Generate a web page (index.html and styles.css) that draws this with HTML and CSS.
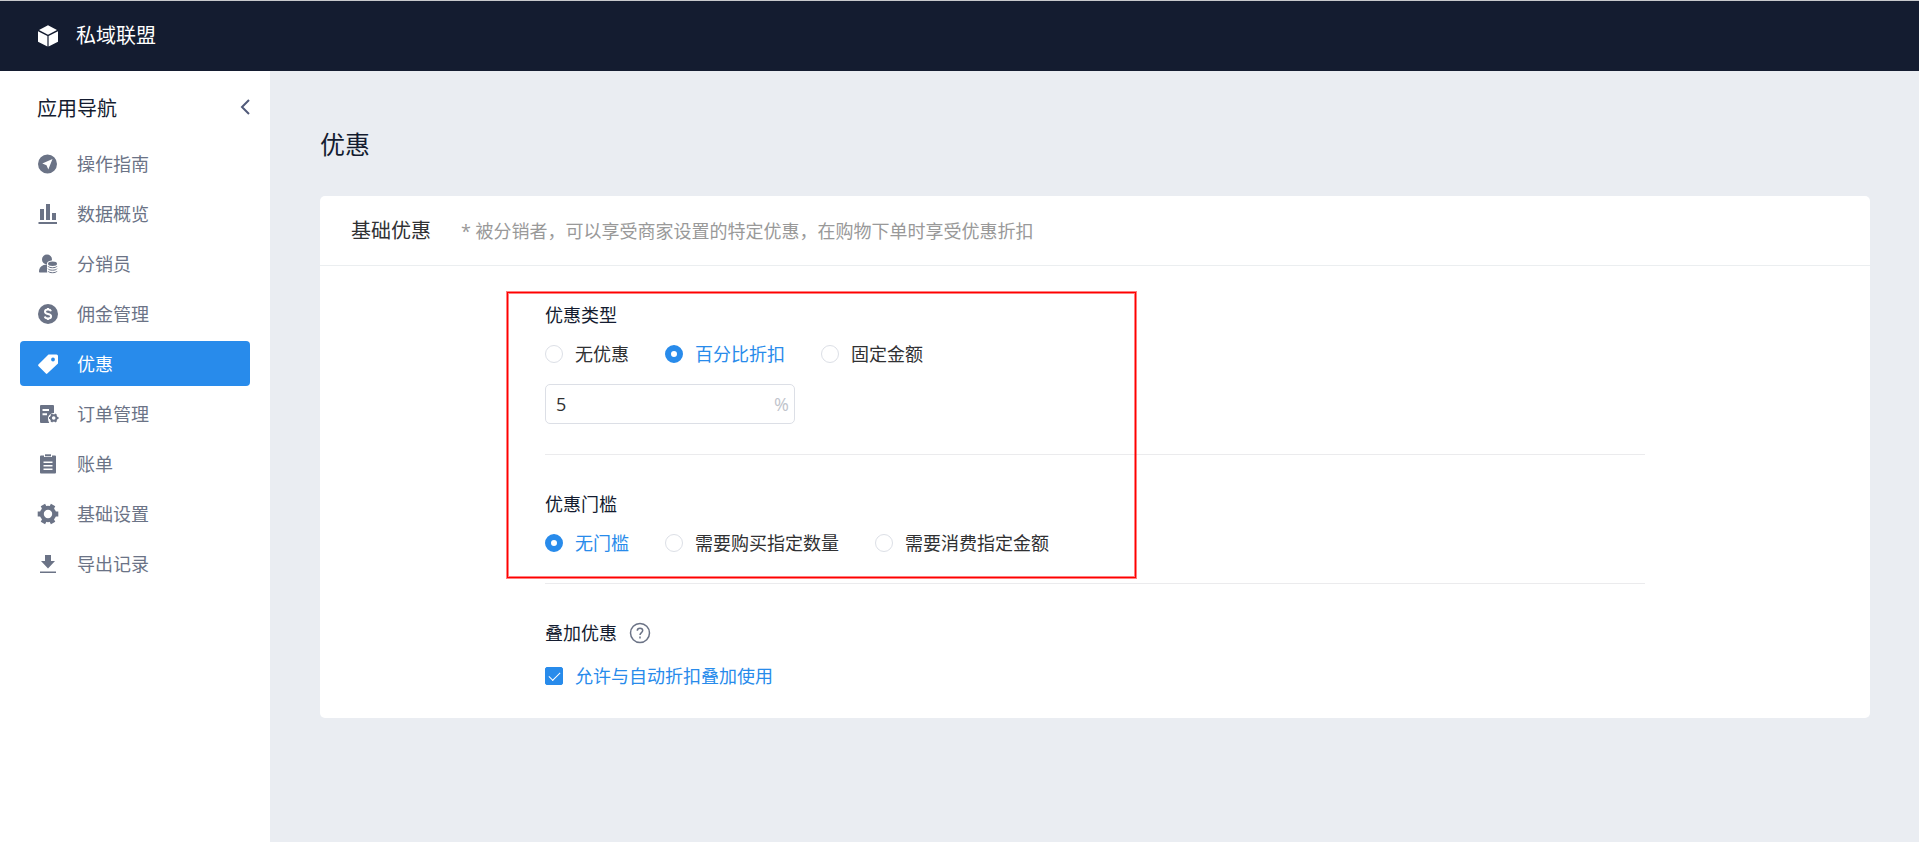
FILE: index.html
```html
<!DOCTYPE html>
<html lang="zh-CN">
<head>
<meta charset="utf-8">
<title>私域联盟</title>
<link rel="stylesheet" href="styles.css">
</head>
<body>
<header class="topbar">
  <svg class="icon" viewBox="0 0 20 20" aria-hidden="true"><path d="M10-.8 19 4 10 8.700 1 4zM0 5.200 9.400 10V20.500L0 15.700zM20 5.200 10.600 10V20.500L20 15.700z"/></svg>
  <span class="brand">私域联盟</span>
</header>
<div class="layout">
  <aside class="sidebar">
    <div class="side-head">
      <h2 class="side-title">应用导航</h2>
      <button class="collapse" type="button" aria-label="收起"><svg viewBox="0 0 10 16" aria-hidden="true"><path d="M9 1 2 8l7 7"/></svg></button>
    </div>
    <nav class="nav">
      <a class="nav-item" href="#"><svg class="icon" viewBox="0 0 20 20"><path fill-rule="evenodd" d="M9.500.5a9.500 9.500 0 1 0 0 19 9.500 9.500 0 0 0 0-19zM14.500 5 10.300 15.500 8.500 11.200 4.300 9.500z"/></svg>操作指南</a>
      <a class="nav-item" href="#"><svg class="icon" viewBox="0 0 20 20"><path d="M2 5h4v11H2zM8 0h4v16H8zM14 9h4v7h-4zM.5 18H19v2H.5z"/></svg>数据概览</a>
      <a class="nav-item" href="#"><svg class="icon" viewBox="0 0 20 20"><circle cx="9" cy="5.500" r="5"/><path d="M1 17.500C1 13.500 4 10.500 9 10.500S17 13 17 17.500c0 .8-.5 1-1 1H2c-.6 0-1-.3-1-1z"/><path class="gap" d="M9 9.500c0-4 11-4 11 0V18c0 3-11 3-11 0z"/><ellipse cx="14.500" cy="9.700" rx="4.500" ry="2.200"/><path class="line" d="M10 12.200c1 2 8 2 9 0M10 14.700c1 2 8 2 9 0M10 17.200c1 2 8 2 9 0"/></svg>分销员</a>
      <a class="nav-item" href="#"><svg class="icon" viewBox="0 0 20 20"><circle cx="10" cy="10" r="10"/><path class="cut" d="M13 7.200C12.600 5.900 11.500 5.500 10 5.500c-1.800 0-3 .8-3 2.200 0 3 6.100 1.500 6.100 4.500 0 1.500-1.300 2.300-3.100 2.300-1.700 0-2.900-.6-3.200-2M10 4v2M10 14v2"/></svg>佣金管理</a>
      <a class="nav-item active" href="#" aria-current="page"><svg class="icon" viewBox="0 0 20 20"><path fill-rule="evenodd" d="M10.500.5H18.500A1.500 1.500 0 0 1 20 2v7.500L9.300 19.600a1 1 0 0 1-1.400 0L.4 12a1 1 0 0 1 0-1.400zM15 3.600a1.900 1.900 0 1 0 0 3.800 1.900 1.900 0 0 0 0-3.800z"/></svg>优惠</a>
      <a class="nav-item" href="#"><svg class="icon" viewBox="0 0 20 20"><path fill-rule="evenodd" d="M3 1h12a1 1 0 0 1 1 1v7c-3.500 0-6 2.500-6 5.500 0 1.500.4 3 1.200 4.500H3a1 1 0 0 1-1-1V2a1 1 0 0 1 1-1zM4.500 5V7H11V5zM4.500 9.300v2H9v-2z"/><circle class="line ring" cx="15.700" cy="14" r="2.800"/><path class="line ring" d="M11 14h2M18.500 14h2M13.400 10l1 1.700M18 10l-1 1.700M13.400 18l1-1.700M18 18l-1-1.700"/></svg>订单管理</a>
      <a class="nav-item" href="#"><svg class="icon" viewBox="0 0 20 20"><path fill-rule="evenodd" d="M3 1.500h3V3h8V1.500h3A1 1 0 0 1 18 2.500v16a1 1 0 0 1-1 1H3a1 1 0 0 1-1-1v-16a1 1 0 0 1 1-1zM5.500 7.500V9h9V7.500zM5.500 11v1.500h9V11zM5.500 14.500V16h9v-1.500z"/><path d="M7 .3h6v2H7z"/></svg>账单</a>
      <a class="nav-item" href="#"><svg class="icon" viewBox="0 0 20 20"><circle class="line rim" cx="10" cy="10" r="6.200"/><path class="line teeth" d="M-.3 10H3M17 10h3.300M4.900 1.100l1.600 2.800M15.100 1.100l-1.600 2.800M4.900 18.900l1.600-2.800M15.100 18.900l-1.600-2.800"/></svg>基础设置</a>
      <a class="nav-item" href="#"><svg class="icon" viewBox="0 0 20 20"><path d="M7 1h6v6h4l-7 7.500L3 7h4zM2 17.500h16V19H2z"/></svg>导出记录</a>
    </nav>
  </aside>
  <main class="main">
    <h1 class="page-title">优惠</h1>
    <section class="card">
      <div class="card-head">
        <h2 class="card-title">基础优惠</h2>
        <p class="hint">* 被分销者，可以享受商家设置的特定优惠，在购物下单时享受优惠折扣</p>
      </div>
      <form class="form">
        <fieldset class="group">
          <legend class="label">优惠类型</legend>
          <div class="options">
            <label class="option"><input type="radio" name="type">无优惠</label>
            <label class="option"><input type="radio" name="type" checked>百分比折扣</label>
            <label class="option"><input type="radio" name="type">固定金额</label>
          </div>
          <div class="field">
            <input class="field-input" type="text" value="5" aria-label="折扣百分比">
            <span class="unit">%</span>
          </div>
        </fieldset>
        <fieldset class="group">
          <legend class="label">优惠门槛</legend>
          <div class="options">
            <label class="option"><input type="radio" name="limit" checked>无门槛</label>
            <label class="option"><input type="radio" name="limit">需要购买指定数量</label>
            <label class="option"><input type="radio" name="limit">需要消费指定金额</label>
          </div>
        </fieldset>
        <fieldset class="group stack">
          <legend class="label">叠加优惠<button class="help" type="button" aria-label="帮助"><svg viewBox="0 0 22 22" aria-hidden="true"><circle cx="11" cy="11" r="9.500"/><path d="M8.300 8.800c0-3.500 5.400-3.300 5.400-.2 0 1.900-2.700 2.200-2.700 4.400M11 14.600v1.800"/></svg></button></legend>
          <div class="options">
            <label class="option"><input type="checkbox" checked>允许与自动折扣叠加使用</label>
          </div>
        </fieldset>
        <div class="highlight" aria-hidden="true"></div>
      </form>
    </section>
  </main>
</div>
</body>
</html>
```
FILE: styles.css
```css
* { box-sizing: border-box; }

body {
  margin: 0;
  min-height: 100vh;
  display: flex;
  flex-direction: column;
  background: #eaedf2;
  color: #303133;
  font: 400 18px/24px "Open Sans", "Noto Sans CJK SC", sans-serif;
}

h1, h2, p { margin: 0; font-weight: inherit; }

button {
  padding: 0;
  border: 0;
  background: none;
  cursor: pointer;
}

.icon {
  width: 20px;
  height: 20px;
  flex: none;
  fill: currentColor;
  overflow: visible;
}

.topbar {
  display: flex;
  align-items: center;
  gap: 18px;
  height: 71px;
  padding: 0 38px;
  border-top: 1px solid #c8c9cc;
  background: #141c30;
  color: #fff;
}

.brand { font-size: 20px; }

.layout { display: flex; flex: 1; }

.sidebar {
  flex: none;
  width: 270px;
  padding: 26px 20px;
  background: #fff;
}

.side-head {
  display: flex;
  align-items: flex-start;
  justify-content: space-between;
  height: 24px;
  margin-bottom: 20px;
  padding-left: 17px;
}

.side-title { font-size: 20px; color: #141c30; }

.collapse {
  display: flex;
  width: 10px;
  height: 20px;
}

.collapse svg {
  fill: none;
  stroke: #515a7a;
  stroke-width: 2;
}

.nav {
  display: flex;
  flex-direction: column;
  gap: 5px;
}

.nav-item {
  display: flex;
  align-items: center;
  gap: 19px;
  height: 45px;
  padding: 0 18px;
  border-radius: 4px;
  color: #6b7386;
  text-decoration: none;
}

.nav-item.active { background: #288beb; color: #fff; }

.line { fill: none; stroke: currentColor; }
.ring { stroke-width: 2; }
.rim { stroke-width: 4; }
.teeth { stroke-width: 5; }
.gap { fill: #fff; }
.cut { fill: none; stroke: #fff; stroke-width: 2; }

.main {
  flex: 1;
  min-width: 0;
  padding: 55px 49px 55px 50px;
}

.page-title {
  margin-bottom: 34px;
  font-size: 25px;
  line-height: 36px;
  color: #141c30;
}

.card { border-radius: 5px; background: #fff; }

.card-head {
  display: flex;
  align-items: center;
  gap: 30px;
  height: 70px;
  padding: 0 31px;
  border-bottom: 1px solid #ebeef0;
}

.card-title { font-size: 20px; }
.hint { color: #999; }

.form {
  position: relative;
  max-width: 1100px;
  margin: 0 auto;
}

.group {
  min-width: 0;
  margin: 0;
  padding: 37px 0 28px;
  border: 0;
  border-bottom: 1px solid #ebebed;
}

.group:first-child { padding-bottom: 30px; }

.label {
  display: flex;
  align-items: center;
  gap: 12px;
  float: left;
  width: 100%;
  padding: 0;
  margin-bottom: 15px;
  color: #141c30;
}

.group.stack { padding-bottom: 30px; border-bottom: 0; }
.stack .label { margin-bottom: 19px; }

.options {
  display: flex;
  flex-wrap: wrap;
  gap: 36px;
  clear: both;
}

.option {
  display: flex;
  align-items: center;
  gap: 12px;
  cursor: pointer;
}

.option:has(input:checked) { color: #288beb; }

.option input {
  appearance: none;
  flex: none;
  width: 18px;
  height: 18px;
  margin: 0;
  border: 1px solid #dcdfe6;
  background: #fff;
}

.option input[type="radio"] { border-radius: 50%; }
.option input[type="radio"]:checked { border: 6px solid #288beb; }

.option input[type="checkbox"] {
  display: grid;
  place-items: center;
  border-radius: 2px;
}

.option input[type="checkbox"]:checked {
  border-color: #288beb;
  background: #288beb;
}

.option input[type="checkbox"]:checked::before {
  content: "";
  width: 10px;
  height: 5px;
  margin-bottom: 3px;
  border: solid #fff;
  border-width: 0 0 1px 1px;
  transform: rotate(-45deg);
}

.field {
  display: flex;
  align-items: center;
  width: 250px;
  height: 40px;
  margin-top: 18px;
  padding: 0 5px 0 10px;
  border: 1px solid #dcdfe6;
  border-radius: 5px;
}

.field-input {
  flex: 1;
  min-width: 0;
  padding: 0;
  border: 0;
  outline: 0;
  background: none;
  color: inherit;
  font: inherit;
}

.unit { color: #c0c4cc; }

.help {
  display: flex;
  width: 22px;
  height: 22px;
}

.help svg {
  fill: none;
  stroke: #6b7386;
  stroke-width: 1.5;
}

/* Outline drawn over the two option groups */
.highlight {
  position: absolute;
  top: 26px;
  left: -38px;
  width: 629px;
  height: 286px;
  border: 1px solid #f00;
  box-shadow: 0 0 0 1px rgba(255, 0, 0, .5), inset 0 0 0 1px rgba(255, 0, 0, .5);
  pointer-events: none;
}
```
